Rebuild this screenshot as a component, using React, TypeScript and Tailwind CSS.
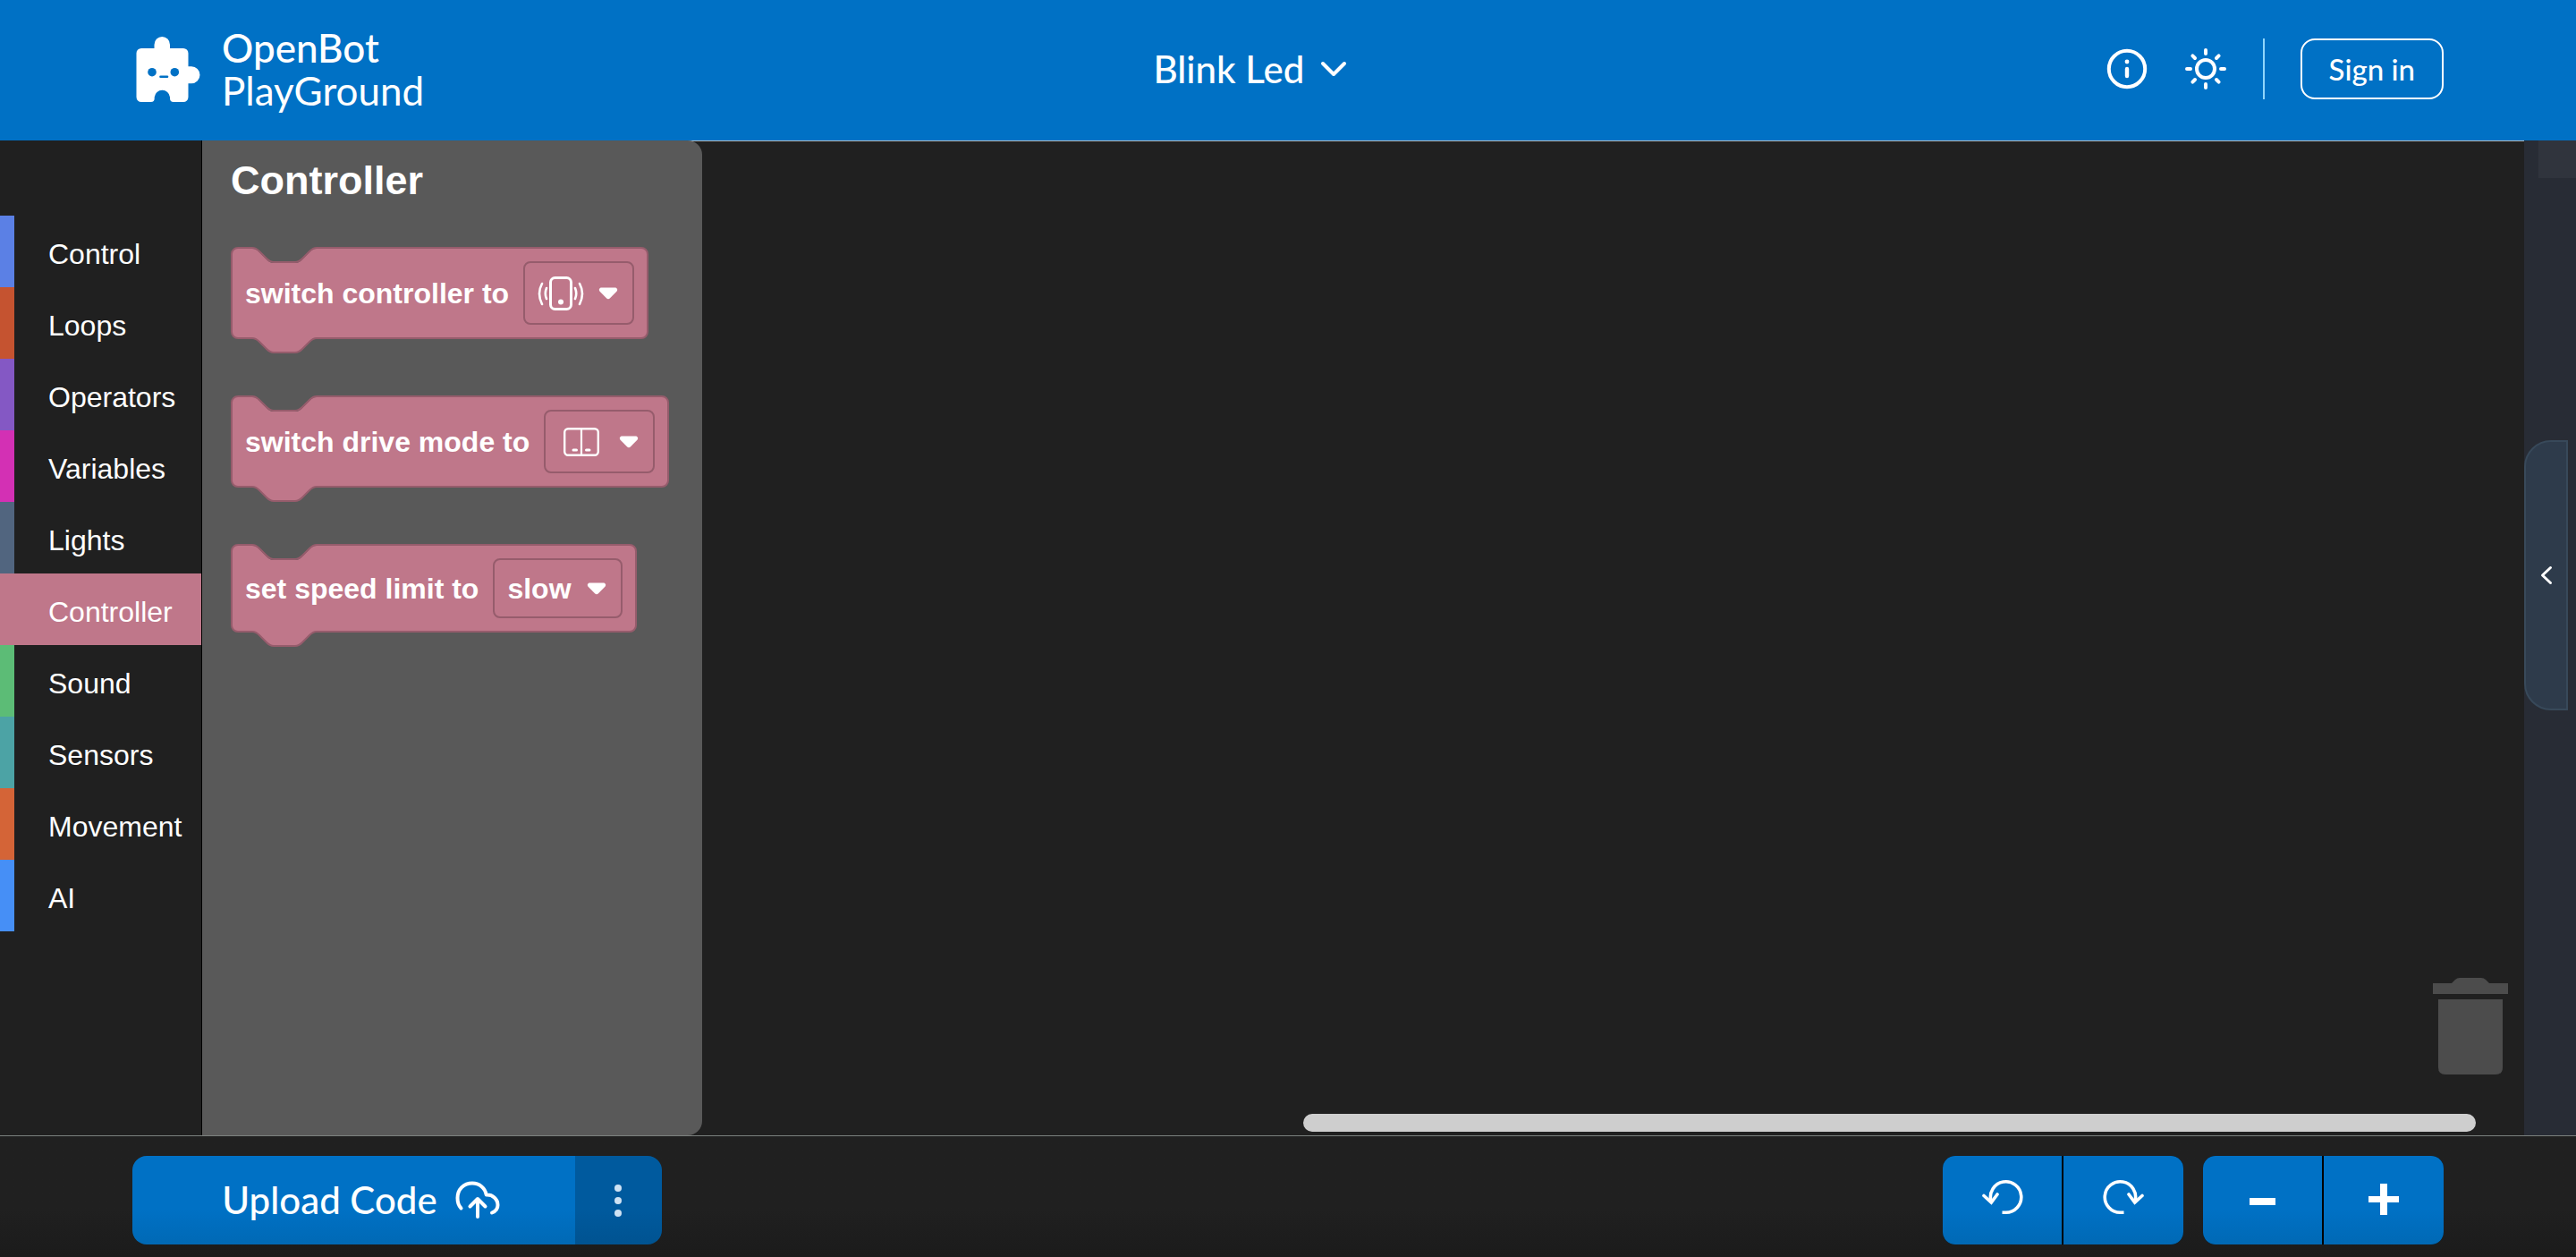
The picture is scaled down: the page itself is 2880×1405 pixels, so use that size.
import type { ReactNode } from "react";

const categories = [
  { name: "Control", bar: "bg-[#5b80e5]" },
  { name: "Loops", bar: "bg-[#c55330]" },
  { name: "Operators", bar: "bg-[#8458c4]" },
  { name: "Variables", bar: "bg-[#d330b4]" },
  { name: "Lights", bar: "bg-[#51657f]" },
  { name: "Controller", bar: "bg-[#bf778a]", selected: true },
  { name: "Sound", bar: "bg-[#5cbc76]" },
  { name: "Sensors", bar: "bg-[#4ca3a5]" },
  { name: "Movement", bar: "bg-[#d46437]" },
  { name: "AI", bar: "bg-[#468ff6]" },
];

function Logo() {
  return (
    <svg className="h-[74px] w-[72px]" viewBox="0 0 72 74" aria-hidden="true">
      <path
        fill="#fff"
        d="M6 14H20.500V10A8.700 9 0 0 1 38 10V14H53A5.500 5.500 0 0 1 58.500 19.500V34.300H62A9.500 9.500 0 0 1 62 53.300H58.500V68.500A5.500 5.500 0 0 1 53 74H42Q38 74 38 70V68.500A8.700 8.700 0 0 0 20.700 68.500V70Q20.700 74 16.700 74H6A5.500 5.500 0 0 1 .5 68.500V19.500A5.500 5.500 0 0 1 6 14Z"
      />
      <circle cx="18" cy="40.700" r="4.800" fill="#0071c5" />
      <circle cx="43.300" cy="40.700" r="4.800" fill="#0071c5" />
      <path d="M27.500 45.800H35" stroke="#0071c5" strokeWidth="2.600" strokeLinecap="round" />
    </svg>
  );
}

function InfoIcon() {
  return (
    <svg className="size-12" viewBox="0 0 48 48" fill="none" stroke="#fff" aria-hidden="true">
      <circle cx="24" cy="24" r="20.200" strokeWidth="4" />
      <path d="M24 24V32" strokeWidth="4.400" strokeLinecap="round" />
      <circle cx="24" cy="16" r="2.400" fill="#fff" stroke="none" />
    </svg>
  );
}

function SunIcon() {
  return (
    <svg className="size-12" viewBox="0 0 48 48" fill="none" stroke="#fff" strokeLinecap="round" aria-hidden="true">
      <circle cx="24" cy="24" r="10" strokeWidth="4" />
      <path
        strokeWidth="4"
        d="M24 3V7M24 41V45M3 24H7M41 24H45M9.400 9.400L12 12M36 36L38.600 38.600M9.400 38.600L12 36M36 12L38.600 9.400"
      />
    </svg>
  );
}

function CloudUploadIcon() {
  return (
    <svg className="h-[42px] w-[50px]" viewBox="0 0 50 42" fill="none" stroke="#fff" strokeWidth="4" strokeLinecap="round" strokeLinejoin="round" aria-hidden="true">
      <path d="M6.500 30.500C3.500 27.500 2.500 24 2.500 19C2.500 9.500 9.500 2.500 19 2.500C27 2.500 33.500 8 34.700 15.500C41.500 15 47.500 20 47.500 27C47.500 31 45 34 41 35.500" />
      <path d="M25 40V21M16.500 28.500L25 20L33.500 28.500" />
    </svg>
  );
}

function TurnIcon({ mirrored = false }: { mirrored?: boolean }) {
  return (
    <svg className="h-10 w-[46px]" viewBox="0 0 46 40" fill="none" stroke="#fff" strokeWidth="3.600" aria-hidden="true">
      <g transform={mirrored ? "matrix(-1 0 0 1 46 0)" : undefined}>
        <path d="M10 24.500A17.200 17.200 0 1 1 26.500 37.200H22.500" />
        <path d="M2 18.500L10.300 26L17 17" strokeLinecap="round" strokeLinejoin="miter" />
      </g>
    </svg>
  );
}

function Caret() {
  return (
    <svg className="h-[14px] w-[22px] shrink-0" viewBox="0 0 22 14" aria-hidden="true">
      <path
        fill="#fff"
        d="M3.500 .5H18.500C21 .5 22 3 20.400 4.800L13 12.300C11.800 13.500 10.200 13.500 9 12.300L1.600 4.800C0 3 1 .5 3.500 .5Z"
      />
    </svg>
  );
}

function PhoneIcon() {
  return (
    <svg className="h-[38px] w-[52px]" viewBox="0 0 52 38" fill="none" stroke="#fff" aria-hidden="true">
      <rect x="14.500" y="1.500" width="23" height="35" rx="5" strokeWidth="3" />
      <circle cx="26" cy="28.500" r="3" fill="#fff" stroke="none" />
      <path
        strokeWidth="2.600"
        strokeLinecap="round"
        d="M10 13Q7.500 19 10 25M5 8Q-1 19 5 31M42 13Q44.500 19 42 25M47 8Q53 19 47 31"
      />
    </svg>
  );
}

function DualPanelIcon() {
  return (
    <svg className="h-[32px] w-[40px]" viewBox="0 0 40 32" fill="none" stroke="#fff" aria-hidden="true">
      <rect x="1.200" y="1.200" width="37.600" height="29.600" rx="4" strokeWidth="2.400" />
      <path strokeWidth="2.200" d="M20 1V31" />
      <path strokeWidth="3" strokeLinecap="round" d="M11 25H14.500M25.500 25H29" />
    </svg>
  );
}

function Block({ label, children }: { label: string; children: ReactNode }) {
  return (
    <div className="relative flex w-fit items-center gap-4 rounded-lg border-2 border-[#965c6c] bg-[#bf778a] p-[14px]">
      <svg className="absolute -top-[3px] left-[22px] h-[20px] w-[72px]" viewBox="0 -1 72 20" aria-hidden="true">
        <path fill="#595959" d="M0 -1V2C4 2 6 4 8 6L16 14C18 16 20 18 24 18H48C52 18 54 16 56 14L64 6C66 4 68 2 72 2V-1Z" />
        <path
          fill="none"
          stroke="#965c6c"
          strokeWidth="2"
          d="M0 1C4 1 6 3 8 5L16 13C18 15 20 17 24 17H48C52 17 54 15 56 13L64 5C66 3 68 1 72 1"
        />
      </svg>
      <svg className="absolute top-full left-[22px] h-[20px] w-[72px]" viewBox="0 0 72 20" aria-hidden="true">
        <path fill="#bf778a" d="M0 0V1C4 1 6 3 8 5L16 13C18 15 20 17 24 17H48C52 17 54 15 56 13L64 5C66 3 68 1 72 1V0Z" />
        <path
          fill="none"
          stroke="#965c6c"
          strokeWidth="2"
          d="M0 1C4 1 6 3 8 5L16 13C18 15 20 17 24 17H48C52 17 54 15 56 13L64 5C66 3 68 1 72 1"
        />
      </svg>
      <span className="text-[32px] leading-8 font-bold whitespace-nowrap">{label}</span>
      {children}
    </div>
  );
}

function IconDropdown({ label, children }: { label: string; children: ReactNode }) {
  return (
    <button
      type="button"
      aria-label={label}
      aria-haspopup="listbox"
      className="flex h-[71px] items-center gap-4 rounded-lg border-2 border-[#965c6c] pr-4 pl-[14px]"
    >
      <span className="flex w-[52px] justify-center">{children}</span>
      <Caret />
    </button>
  );
}

export default function App() {
  return (
    <div className="flex min-h-screen flex-col bg-[#202020] font-['Liberation_Sans',sans-serif] text-white">
      <header className="flex h-[157px] items-center justify-between bg-[#0071c5] pr-[148px] pb-1 pl-[152px] font-['Lato',sans-serif]">
        <a href="#" className="flex items-center gap-6">
          <Logo />
          <span className="flex flex-col text-[44px] leading-[48px]">
            <span className="font-medium">OpenBot</span>
            <span>PlayGround</span>
          </span>
        </a>
        <button type="button" className="mr-8 flex items-center gap-[18px] text-[42px] leading-[48px] font-medium">
          Blink Led
          <svg className="h-5 w-[30px]" viewBox="0 0 30 20" fill="none" stroke="#fff" strokeWidth="4" strokeLinecap="round" strokeLinejoin="round" aria-hidden="true">
            <path d="M3 4L15 16L27 4" />
          </svg>
        </button>
        <div className="flex items-center">
          <button type="button" aria-label="Information">
            <InfoIcon />
          </button>
          <button type="button" aria-label="Theme" className="ml-10">
            <SunIcon />
          </button>
          <div className="ml-10 h-[68px] w-0.5 bg-[#8fd6fb]" />
          <button
            type="button"
            className="ml-10 rounded-2xl border-2 border-white px-[30px] py-3 text-[33px] leading-10 font-medium"
          >
            Sign in
          </button>
        </div>
      </header>

      <main className="flex flex-1 items-stretch">
        <nav aria-label="Block categories" className="w-[226px] border-r border-black pt-[84px]">
          <ul>
            {categories.map((c) => (
              <li key={c.name}>
                <button
                  type="button"
                  className={`flex h-20 w-full items-stretch text-left text-[32px] leading-8 ${c.selected ? "bg-[#bf778a]" : ""}`}
                >
                  <span className={`w-4 ${c.bar}`} />
                  <span className="self-center pt-1.5 pl-[38px]">{c.name}</span>
                </button>
              </li>
            ))}
          </ul>
        </nav>

        <div className="flex flex-1 border-t border-[#b4bac0]">
          <section className="-mt-px w-[559px] rounded-r-2xl bg-[#595959] pl-8">
            <h2 className="pt-[21px] text-[45px] leading-[48px] font-bold">Controller</h2>
            <div className="mt-[50px] flex flex-col gap-[63px]">
              <Block label="switch controller to">
                <IconDropdown label="Controller">
                  <PhoneIcon />
                </IconDropdown>
              </Block>
              <Block label="switch drive mode to">
                <IconDropdown label="Drive mode">
                  <DualPanelIcon />
                </IconDropdown>
              </Block>
              <Block label="set speed limit to">
                <span className="relative flex items-center">
                  <select
                    aria-label="Speed limit"
                    className="h-[67px] w-[145px] appearance-none rounded-lg border-2 border-[#965c6c] bg-transparent pl-[14px] text-[32px] font-bold"
                  >
                    <option>slow</option>
                  </select>
                  <span className="pointer-events-none absolute right-[18px]">
                    <Caret />
                  </span>
                </span>
              </Block>
            </div>
          </section>

          <section aria-label="Workspace" className="flex flex-1 flex-col justify-end">
            <svg className="mr-[18px] h-[110px] w-[84px] self-end" viewBox="0 0 84 110" fill="#4c4c4c" aria-hidden="true">
              <path d="M0 7H21L25 3Q27 1 30 1H54Q57 1 59 3L63 7H84V19H0Z" />
              <path d="M6 25H78V101Q78 109 70 109H14Q6 109 6 101Z" />
            </svg>
            <div className="mt-[43px] mr-[54px] mb-1 ml-[33%] h-5 rounded-full bg-[#cecece]" />
          </section>
        </div>

        <aside className="flex w-[58px] flex-col bg-[#282c35]">
          <div className="h-[42px] w-[42px] self-end bg-[#30343d]" />
          <button
            type="button"
            aria-label="Open panel"
            className="mt-[293px] flex h-[302px] w-[49px] items-center justify-center rounded-l-[30px] border-2 border-[#38495a] bg-[#2e3b4b]"
          >
            <svg className="h-[22px] w-[14px]" viewBox="0 0 14 22" fill="none" stroke="#fff" strokeWidth="3" strokeLinecap="round" strokeLinejoin="round" aria-hidden="true">
              <path d="M11.500 2.500L2.500 11L11.500 19.500" />
            </svg>
          </button>
        </aside>
      </main>

      <footer className="flex items-center justify-between border-t border-[#7c817f] bg-linear-to-b from-[#202020] from-60% to-[#1b1b1b] pt-[22px] pr-[148px] pb-[14px] pl-[148px]">
        <div className="flex h-[99px] overflow-hidden rounded-2xl font-['Lato',sans-serif]">
          <button
            type="button"
            className="flex w-[495px] items-center justify-center gap-5 bg-linear-to-b from-[#0071c5] from-60% to-[#0069b5] pb-0.5 pl-4 text-[42px] leading-[48px] font-medium"
          >
            Upload Code
            <CloudUploadIcon />
          </button>
          <button
            type="button"
            aria-label="More"
            className="flex w-[97px] flex-col items-center justify-center gap-1.5 bg-linear-to-b from-[#005a9e] from-60% to-[#005391] pr-0.5"
          >
            <span className="size-2 rounded-full bg-[#cfe2f3]" />
            <span className="size-2 rounded-full bg-[#cfe2f3]" />
            <span className="size-2 rounded-full bg-[#cfe2f3]" />
          </button>
        </div>

        <div className="flex gap-[22px]">
          <div className="flex h-[99px] gap-0.5 overflow-hidden rounded-[14px] bg-black">
            <button type="button" aria-label="Undo" className="flex w-[133px] items-center justify-center bg-linear-to-b from-[#0071c5] from-60% to-[#0069b5] pb-2">
              <TurnIcon />
            </button>
            <button type="button" aria-label="Redo" className="flex w-[134px] items-center justify-center bg-linear-to-b from-[#0071c5] from-60% to-[#0069b5] pb-2">
              <TurnIcon mirrored />
            </button>
          </div>
          <div className="flex h-[99px] gap-0.5 overflow-hidden rounded-[14px] bg-black">
            <button type="button" aria-label="Zoom out" className="flex w-[133px] items-center justify-center bg-linear-to-b from-[#0071c5] from-60% to-[#0069b5]">
              <svg className="h-9 w-[34px]" viewBox="0 0 34 36" fill="#fff" aria-hidden="true">
                <path d="M2 15H31V23H2Z" />
              </svg>
            </button>
            <button type="button" aria-label="Zoom in" className="flex w-[134px] items-center justify-center bg-linear-to-b from-[#0071c5] from-60% to-[#0069b5] pb-1">
              <svg className="h-9 w-[34px]" viewBox="0 0 34 36" fill="#fff" aria-hidden="true">
                <path d="M13 1H21V15H34V22H21V36H13V22H0V15H13Z" />
              </svg>
            </button>
          </div>
        </div>
      </footer>
    </div>
  );
}
